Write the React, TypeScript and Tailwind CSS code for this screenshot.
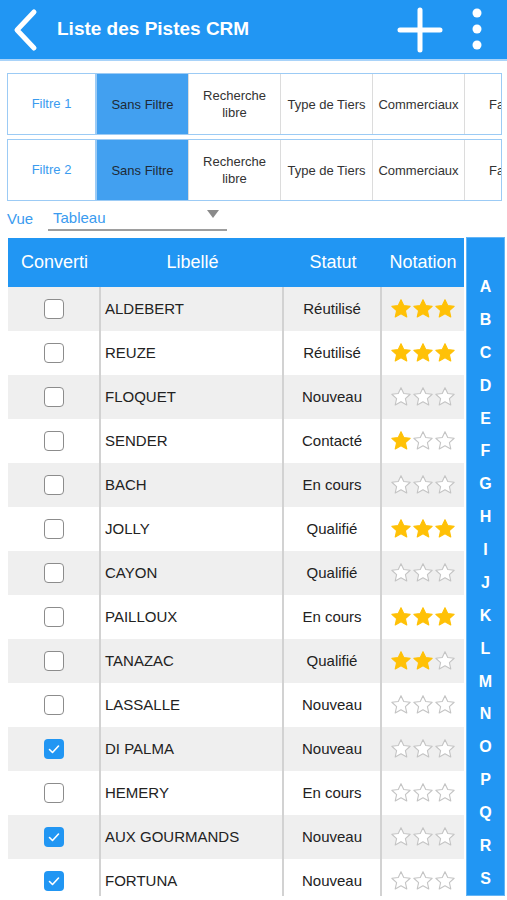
import React from 'react';

const rows = [
  { name: 'ALDEBERT', status: 'Réutilisé', stars: 3, checked: false },
  { name: 'REUZE', status: 'Réutilisé', stars: 3, checked: false },
  { name: 'FLOQUET', status: 'Nouveau', stars: 0, checked: false },
  { name: 'SENDER', status: 'Contacté', stars: 1, checked: false },
  { name: 'BACH', status: 'En cours', stars: 0, checked: false },
  { name: 'JOLLY', status: 'Qualifié', stars: 3, checked: false },
  { name: 'CAYON', status: 'Qualifié', stars: 0, checked: false },
  { name: 'PAILLOUX', status: 'En cours', stars: 3, checked: false },
  { name: 'TANAZAC', status: 'Qualifié', stars: 2, checked: false },
  { name: 'LASSALLE', status: 'Nouveau', stars: 0, checked: false },
  { name: 'DI PALMA', status: 'Nouveau', stars: 0, checked: true },
  { name: 'HEMERY', status: 'En cours', stars: 0, checked: false },
  { name: 'AUX GOURMANDS', status: 'Nouveau', stars: 0, checked: true },
  { name: 'FORTUNA', status: 'Nouveau', stars: 0, checked: true },
];

const letters = 'ABCDEFGHIJKLMNOPQRS'.split('');

const filterCells = ['Sans Filtre', 'Recherche libre', 'Type de Tiers', 'Commerciaux', 'Fa'];

const Star = ({ filled }: { filled: boolean }) => (
  <svg width="22" height="22" viewBox="0 0 24 24">
    <path
      d="M12 1.8l3 6.4 7 .8-5.2 4.8 1.5 6.9L12 17.2l-6.3 3.5 1.5-6.9L2 9l7-.8z"
      fill={filled ? '#ffc107' : '#ffffff'}
      stroke={filled ? '#ffc107' : '#c4c4c4'}
      strokeWidth="1.2"
      strokeLinejoin="round"
    />
  </svg>
);

const Checkbox = ({ checked }: { checked: boolean }) =>
  checked ? (
    <div className="w-[20px] h-[20px] rounded-[4px] bg-[#2196f3] flex items-center justify-center">
      <svg width="14" height="14" viewBox="0 0 14 14">
        <path d="M2.5 7.5l3 3 6-6.5" fill="none" stroke="#fff" strokeWidth="1.6" strokeLinecap="round" strokeLinejoin="round" />
      </svg>
    </div>
  ) : (
    <div className="w-[20px] h-[20px] rounded-[4px] border-[1.5px] border-[#8c8c8c] bg-white" />
  );

const FilterRow = ({ label }: { label: string }) => (
  <div className="flex h-[62px] w-[495px] ml-[7px] border border-[#9ccbf5] overflow-hidden">
    <div className="w-[89px] shrink-0 flex items-center justify-center border-r-2 border-[#9ccbf5] text-[13px] text-[#3a9bef]">
      {label}
    </div>
    {filterCells.map((c, i) => (
      <div
        key={c}
        className={`w-[92px] shrink-0 flex items-center text-center leading-[17px] text-[13px] border-r border-[#dcdcdc] ${
          i === 0 ? 'bg-[#42a0f0] text-[#1e2a36]' : 'bg-white text-[#333]'
        } ${i === 4 ? 'justify-start pl-[24px]' : 'justify-center'}`}
      >
        {c === 'Recherche libre' ? (
          <span>
            Recherche
            <br />
            libre
          </span>
        ) : (
          c
        )}
      </div>
    ))}
  </div>
);

export default function App() {
  return (
    <div className="w-[507px] h-[900px] bg-white overflow-hidden" style={{ fontFamily: '"Liberation Sans", Arial, sans-serif' }}>
      {/* Header */}
      <div className="h-[61px] bg-[#2196f3] flex items-center border-b-2 border-[#a9d3f9]">
        <svg width="30" height="44" viewBox="0 0 30 44" className="ml-[10px]">
          <path d="M24 4L7 22l17 18" fill="none" stroke="#fff" strokeWidth="5" strokeLinecap="round" strokeLinejoin="round" />
        </svg>
        <div className="ml-[17px] text-white font-bold text-[19px]">Liste des Pistes CRM</div>
        <div className="flex-1" />
        <svg width="46" height="46" viewBox="0 0 46 46" className="mr-[28px]">
          <path d="M23 3v40M3 23h40" stroke="#fff" strokeWidth="5" strokeLinecap="round" />
        </svg>
        <svg width="12" height="46" viewBox="0 0 12 46" className="mr-[24px]">
          <circle cx="6" cy="6" r="4.5" fill="#fff" />
          <circle cx="6" cy="22" r="4.5" fill="#fff" />
          <circle cx="6" cy="38" r="4.5" fill="#fff" />
        </svg>
      </div>

      {/* Filters */}
      <div className="mt-[12px] flex flex-col gap-[4px]">
        <FilterRow label="Filtre 1" />
        <FilterRow label="Filtre 2" />
      </div>

      {/* Vue */}
      <div className="flex items-center h-[32px] ml-[7px] mt-[2px]">
        <span className="text-[15px] text-[#3a9bef] w-[41px]">Vue</span>
        <div className="w-[179px] h-[24px] border-b-2 border-[#9e9e9e] flex items-center pl-[5px] relative">
          <span className="text-[15px] text-[#3a9bef]">Tableau</span>
          <svg width="12" height="8" viewBox="0 0 12 8" className="absolute right-[8px] top-[3px]">
            <path d="M0 0h12L6 8z" fill="#8a8a8a" />
          </svg>
        </div>
      </div>

      {/* Table + index */}
      <div className="flex ml-[8px] mt-[2px] gap-[2px]">
        <div className="w-[456px] h-[658px] overflow-hidden mt-[1px]">
          <div className="flex h-[49px] bg-[#2196f3] text-white text-[18px]">
            <div className="w-[93px] flex items-center justify-center">Converti</div>
            <div className="w-[183px] flex items-center justify-center">Libellé</div>
            <div className="w-[98px] flex items-center justify-center">Statut</div>
            <div className="w-[82px] flex items-center justify-center">Notation</div>
          </div>
          {rows.map((r, i) => (
            <div key={r.name} className={`flex h-[44px] text-[15px] text-[#222] ${i % 2 === 0 ? 'bg-[#efefef]' : 'bg-white'}`}>
              <div className="w-[93px] flex items-center justify-center border-r-2 border-[#d2d2d2]">
                <Checkbox checked={r.checked} />
              </div>
              <div className="w-[183px] flex items-center pl-[4px] border-r-2 border-[#d2d2d2]">{r.name}</div>
              <div className="w-[98px] flex items-center justify-center border-r-2 border-[#d2d2d2]">{r.status}</div>
              <div className="w-[82px] flex items-center pl-[8px] gap-0">
                {[0, 1, 2].map((s) => (
                  <Star key={s} filled={s < r.stars} />
                ))}
              </div>
            </div>
          ))}
        </div>
        <div className="w-[39px] h-[659px] bg-[#2196f3] border border-[#64b5f6] flex flex-col items-center justify-between pt-[39px] pb-[6px]">
          {letters.map((l) => (
            <span key={l} className="text-white font-bold text-[16px] leading-[20px]">
              {l}
            </span>
          ))}
        </div>
      </div>
    </div>
  );
}
